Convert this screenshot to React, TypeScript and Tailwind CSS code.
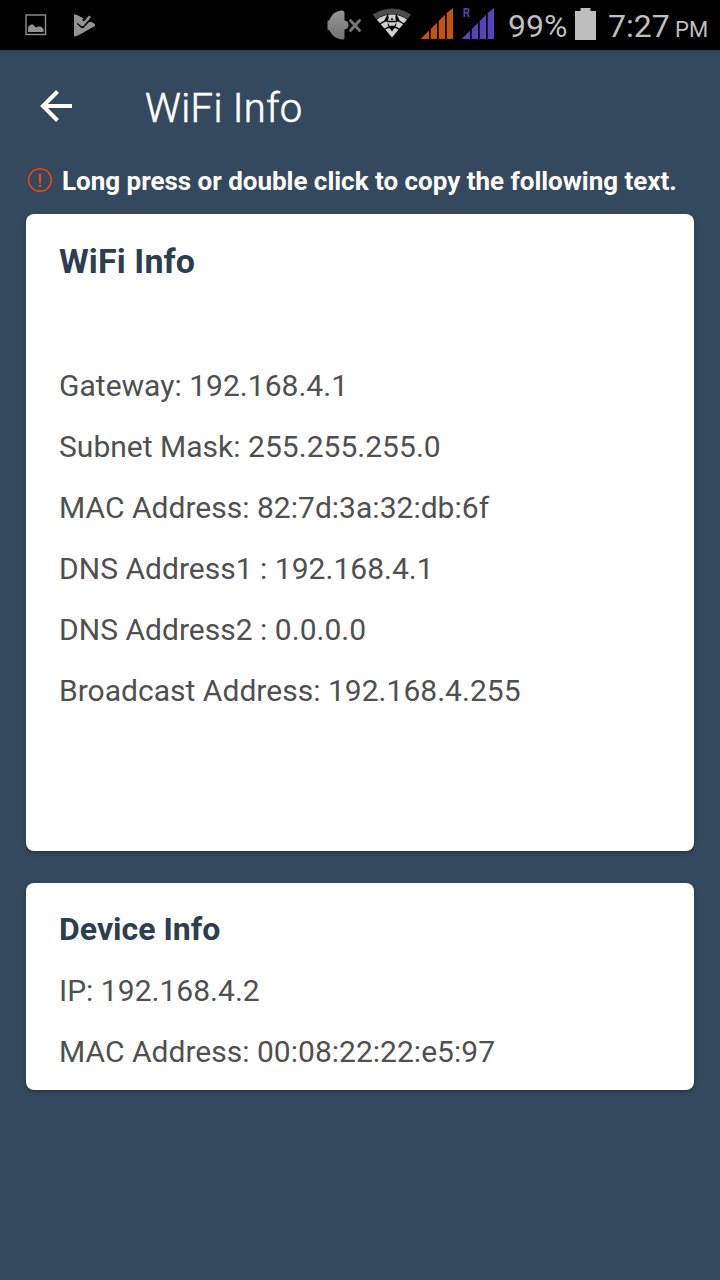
import React from "react";

const wifiRows = [
  "Gateway: 192.168.4.1",
  "Subnet Mask: 255.255.255.0",
  "MAC Address: 82:7d:3a:32:db:6f",
  "DNS Address1 : 192.168.4.1",
  "DNS Address2 : 0.0.0.0",
  "Broadcast Address: 192.168.4.255",
];

const deviceRows = ["IP: 192.168.4.2", "MAC Address: 00:08:22:22:e5:97"];

function PictureIcon() {
  return (
    <svg className="ml-[25px] h-[22px] w-[22px] shrink-0" viewBox="0 0 22 22">
      <rect x="1" y="1" width="19.5" height="19.5" fill="none" stroke="#929292" strokeWidth="1.4" />
      <path d="M3 18V13L6 10.5H8L11 13.5L13 12.5H16L18.5 15V18Z" fill="#929292" />
    </svg>
  );
}

function PlayCheckIcon() {
  return (
    <svg className="ml-[26px] h-[23px] w-[23px] shrink-0" viewBox="0 0 23 23">
      <path
        d="M1 0.5H3L10.5 4.3L9 6.3L11 7.5L16 1.5L18 3L10.5 12L8.5 12.2L4.5 9L4 10L8.5 14.3L10.5 14L16 8L18.5 8L22 10V12L5 21.5L2 22.5H1Z"
        fill="#929292"
      />
    </svg>
  );
}

function MutedIcon() {
  return (
    <svg className="h-[30px] w-[34px] shrink-0" viewBox="0 0 34 30">
      <defs>
        <linearGradient id="speaker" x2="0" y2="1">
          <stop stopColor="#959595" />
          <stop offset="1" stopColor="#737373" />
        </linearGradient>
      </defs>
      <path
        d="M0.5 11L2.5 10C5 4 9 0.5 15.5 0.5Q17.5 0.5 17.5 3V10.5C20 11 21.5 12 21.5 15S20 19 17.5 19.5V28Q17.5 30 15.5 29.5C9 29 5 25.5 2.5 20.5L0.5 19.5Z"
        fill="url(#speaker)"
      />
      <path d="M23.5 10.5L32.5 20.5M32.5 10.5L23.5 20.5" stroke="#777" strokeWidth="2.8" strokeLinecap="round" />
    </svg>
  );
}

function WifiIcon() {
  return (
    <svg className="ml-[11px] h-[30px] w-[40px] shrink-0" viewBox="0 0 40 30">
      <path d="M0.7 6.5Q20 -5.5 39 6.5L35.5 11Q20 1 4.2 11Z" fill="#4d4d4d" />
      <path d="M4.7 11.5Q20 1.5 35 11.5L20 29.5Z" fill="#d0d0d0" />
      <path d="M7.8 16Q20 7.5 32 16M12 21.5Q20 16 28 21.5" fill="none" stroke="#000" strokeWidth="1.3" />
      <path d="M15.8 6L12.2 12.5L15.5 13.5L16 18L20 23.5L24 18L24.5 13.5L27.8 12.5L24.2 6L22 12.5H18Z" fill="#000" />
      <path d="M17.2 7H22.8L24 12.8H16ZM15.5 14.3H24.5L22.5 17.8H17.5Z" fill="#d0d0d0" />
      <path d="M20 9.5L21.5 12H18.5Z" fill="#000" />
    </svg>
  );
}

function SignalBars({ color }: { color: string }) {
  return (
    <path
      d="M0 31V30.5L8 22.5V31ZM9.7 31V21L16 14.7V31ZM17.7 31V13L24 6.7V31ZM25.7 31V5L32 0V31Z"
      fill={color}
    />
  );
}

function SignalIcons() {
  return (
    <svg className="h-[50px] w-[76px] shrink-0" viewBox="0 0 76 50">
      <g transform="translate(0 8)">
        <SignalBars color="#c2550b" />
      </g>
      <g transform="translate(41 8)">
        <SignalBars color="#5742bd" />
      </g>
      <text x="41.7" y="16.5" fill="#5742bd" fontFamily="Roboto, sans-serif" fontSize="13.5" fontWeight="600" textLength="7.3" lengthAdjust="spacingAndGlyphs">R</text>
    </svg>
  );
}

function InfoRow({ text }: { text: string }) {
  return (
    <p className="h-[61px] text-[30px] leading-[61px] tracking-[0.02px] whitespace-nowrap text-[#505050]">{text}</p>
  );
}

export default function App() {
  return (
    <div className="flex h-[1280px] w-[720px] flex-col overflow-hidden bg-[#34495e] font-['Roboto',sans-serif]">
      <header className="flex h-[50px] shrink-0 items-center bg-black text-[#bebebe]">
        <PictureIcon />
        <PlayCheckIcon />
        <div className="flex-1" />
        <div className="flex h-[50px] w-[393px] items-center">
          <MutedIcon />
          <div className="-mt-1 flex">
            <WifiIcon />
          </div>
          <div className="ml-[9px] flex">
            <SignalIcons />
          </div>
          <span className="ml-[11px] w-[67px] pt-[2px] text-[32px] leading-[48px] whitespace-nowrap">99%</span>
          <svg className="-mt-[2px] h-[32px] w-[21px] shrink-0" viewBox="0 0 21 32">
            <path d="M0 3H5.5V0H15.5V3H21V32H0Z" fill="#bebebe" />
          </svg>
          <span className="ml-[12px] w-[67px] pt-[2px] text-[32px] leading-[48px] whitespace-nowrap">7:27</span>
          <span className="pt-[9px] text-[22px] leading-[41px]">PM</span>
        </div>
      </header>

      <div className="flex h-[112px] shrink-0 items-center bg-linear-to-b from-[#2f4254] to-[#34495e] to-5% pl-[40px]">
        <svg className="h-[32px] w-[32px]" viewBox="0 0 32 32">
          <path d="M32 16H3M17.5 1.5L3 16L17.5 30.5" fill="none" stroke="#fff" strokeWidth="4" />
        </svg>
        <h1 className="ml-[73px] pt-[5px] text-[40px] leading-[48px] font-light tracking-[0.35px] text-white [-webkit-text-stroke:0.6px_white]">
          WiFi Info
        </h1>
      </div>

      <div className="flex h-[38px] shrink-0 items-center pl-[28px]">
        <svg className="-mt-[2px] h-[24px] w-[24px]" viewBox="0 0 24 24">
          <circle cx="12" cy="12" r="11.3" fill="none" stroke="#ff430a" strokeWidth="1.4" />
          <path d="M12 5.5V15.2M12 17V19" stroke="#ff430a" strokeWidth="2" />
        </svg>
        <p className="ml-[10px] text-[26px] leading-[38px] font-bold tracking-[-0.02px] whitespace-nowrap text-white">
          Long press or double click to copy the following text.
        </p>
      </div>

      <main className="flex flex-col gap-[32px] px-[26px] pt-[14px]">
        <section className="h-[637px] rounded-[8px] bg-white px-[33px] pt-[27px] shadow-[0_2px_4px_rgba(0,0,0,0.3)]">
          <h2 className="mb-[60px] text-[34px] leading-[40px] font-bold tracking-[0.1px] text-[#2c3e50]">WiFi Info</h2>
          <div className="pt-[14px]">
            {wifiRows.map((row) => (
              <InfoRow key={row} text={row} />
            ))}
          </div>
        </section>
        <section className="h-[207px] rounded-[8px] bg-white px-[33px] pt-[26px] shadow-[0_2px_4px_rgba(0,0,0,0.3)]">
          <h2 className="mb-[11px] text-[32px] leading-[40px] font-bold text-[#2c3e50]">Device Info</h2>
          {deviceRows.map((row) => (
            <InfoRow key={row} text={row} />
          ))}
        </section>
      </main>
    </div>
  );
}
